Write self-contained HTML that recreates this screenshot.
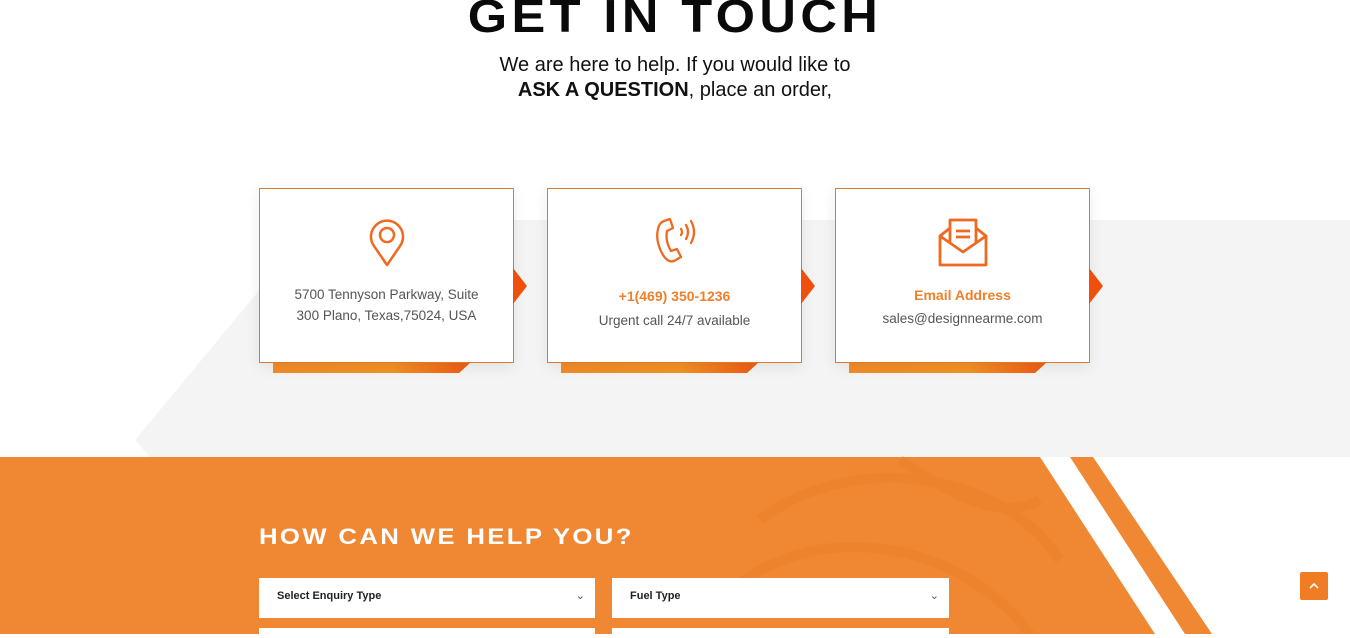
<!DOCTYPE html>
<html><head><meta charset="utf-8"><style>
*{margin:0;padding:0;box-sizing:border-box}
body{width:1350px;height:634px;overflow:hidden;background:#fff;font-family:"Liberation Sans",sans-serif;position:relative}
.abs{position:absolute}
h1{position:absolute;left:0;width:1350px;top:-12px;text-align:center;font-size:46px;font-weight:900;color:#0a0a0a;letter-spacing:4px;transform:scaleX(1.1);transform-origin:675px 0;line-height:56px}
.sub{position:absolute;left:0;width:1350px;text-align:center;font-size:20px;color:#111;line-height:25px;top:53px}
.card{position:absolute;top:188px;width:255px;height:175px;background:#fff;border:1px solid #e07a2a;box-shadow:0 4px 14px rgba(0,0,0,.08);text-align:center;z-index:2}
.tab{position:absolute;top:362px;height:11px;width:198px;background:linear-gradient(90deg,#f28c28,#f39323 60%,#f05a14);clip-path:polygon(0 0,100% 0,94% 100%,0 100%);z-index:1}
.arr{position:absolute;top:268px;width:14px;height:36px;background:#f04e0c;clip-path:polygon(0 0,100% 50%,0 100%);z-index:2}
.t{font-size:13.5px;color:#555;line-height:21px}
.o{font-size:14px;font-weight:bold;color:#ef7f2a}
.sel{position:absolute;background:#fff;height:40px;font-size:11px;font-weight:bold;color:#222;padding:12px 18px}
.sel span{position:absolute;right:10px;top:11px;font-weight:normal;color:#555}
</style></head><body>
<svg class="abs" style="left:0;top:0" width="1350" height="634">
<polygon points="318,220 1350,220 1350,457 150,457 135,440 257,293" fill="#f4f4f4"/>
<polygon points="0,457 1093,457 1212,634 0,634" fill="#f08733"/>
<path d="M760 520 C850 450 1000 470 1060 560 M720 600 C800 520 950 530 1030 634 M900 460 C960 500 1000 520 1040 500" stroke="#ec7a22" stroke-width="10" fill="none" opacity=".35"/>
<polygon points="1040,457 1070,457 1185,634 1155,634" fill="#fff"/>
</svg>
<h1>GET IN TOUCH</h1>
<div class="sub">We are here to help. If you would like to<br><b>ASK A QUESTION</b>, place an order,</div>

<div class="card" style="left:259px">
<svg style="margin-top:27px" width="40" height="52" viewBox="0 0 40 52"><path d="M20 49 L7 30 A16 16 0 1 1 33 30 Z" fill="none" stroke="#ef6a20" stroke-width="2.5" stroke-linejoin="round"/><circle cx="20" cy="19" r="7" fill="none" stroke="#ef6a20" stroke-width="2.5"/></svg>
<div class="t" style="margin-top:11px">5700 Tennyson Parkway, Suite<br>300 Plano, Texas,75024, USA</div>
</div>
<div class="tab" style="left:273px"></div><div class="arr" style="left:513px"></div>

<div class="card" style="left:547px">
<svg style="margin-top:25px" width="50" height="54" viewBox="0 0 50 52"><path d="M14 6 L20 4 L23 13 L17 16 Q15 26 21 36 L27 34 L31 42 L24 46 Q18 48 13 40 Q5 26 8 14 Q9 8 14 6 Z" fill="none" stroke="#ef6a20" stroke-width="2.3" stroke-linejoin="round"/><path d="M31 14 Q33 17 31 20 M36 10 Q40 17 36 24 M41 6 Q47 17 41 28" fill="none" stroke="#ef6a20" stroke-width="2.3" stroke-linecap="round"/></svg>
<div class="o" style="margin-top:15px">+1(469) 350-1236</div>
<div class="t" style="margin-top:6px">Urgent call 24/7 available</div>
</div>
<div class="tab" style="left:561px"></div><div class="arr" style="left:801px"></div>

<div class="card" style="left:835px">
<svg style="margin-top:27px" width="52" height="52" viewBox="0 0 52 52"><path d="M3 20 L13 12 L13 4 L39 4 L39 12 L49 20 L49 49 L3 49 Z M3 20 L26 36 L49 20 M13 12 L13 28 M39 12 L39 28" fill="none" stroke="#ef6a20" stroke-width="2.8" stroke-linejoin="round"/><path d="M19 15 H33 M19 21 H33" stroke="#ef6a20" stroke-width="2.8"/></svg>
<div class="o" style="margin-top:14px">Email Address</div>
<div class="t" style="margin-top:5px">sales@designnearme.com</div>
</div>
<div class="tab" style="left:849px"></div><div class="arr" style="left:1089px"></div>

<div class="abs" style="left:259px;top:524px;font-size:22px;font-weight:900;color:#fff;letter-spacing:2px;transform:scaleX(1.17);transform-origin:0 0">HOW CAN WE HELP YOU?</div>
<div class="sel" style="left:259px;top:578px;width:336px">Select Enquiry Type<span>&#8964;</span></div>
<div class="sel" style="left:612px;top:578px;width:337px">Fuel Type<span>&#8964;</span></div>
<div class="abs" style="left:259px;top:628px;width:336px;height:10px;background:#fff"></div>
<div class="abs" style="left:612px;top:628px;width:337px;height:10px;background:#fff"></div>
<div class="abs" style="left:1300px;top:572px;width:28px;height:28px;background:#f07d24;border-radius:2px">
<svg width="28" height="28"><path d="M10 16 L14 12 L18 16" stroke="#fff" stroke-width="1.6" fill="none"/></svg></div>
</body></html>
